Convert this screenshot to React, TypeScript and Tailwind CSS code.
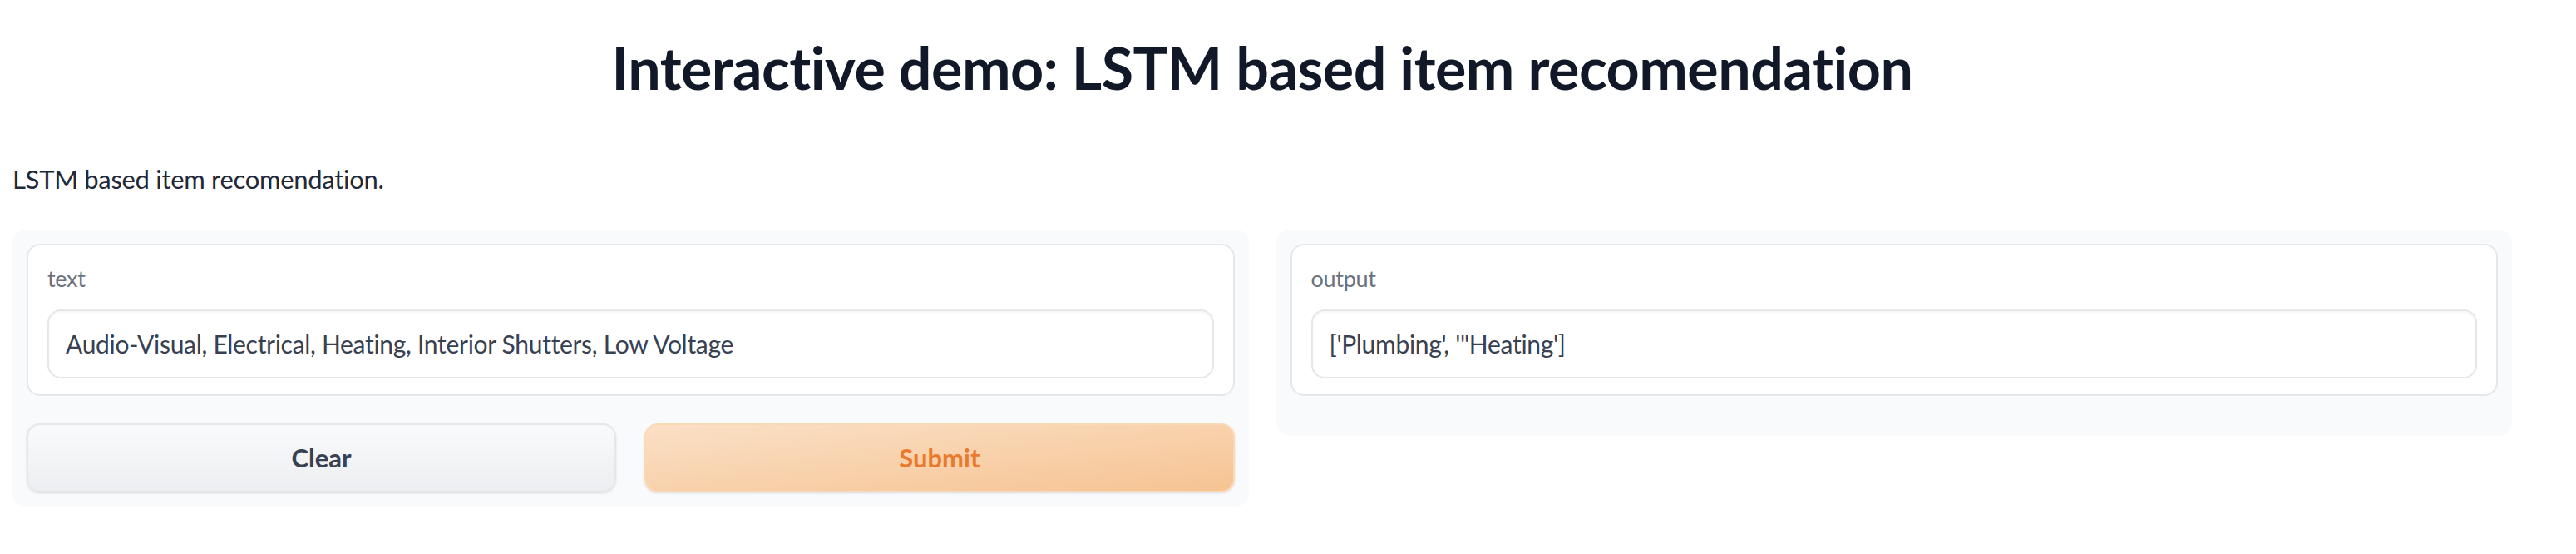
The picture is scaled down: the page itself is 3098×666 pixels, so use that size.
import React from 'react';

const font = { fontFamily: 'Lato, "Noto Sans", sans-serif' };

export default function App() {
  return (
    <div className="bg-white min-h-[666px] w-[3098px]" style={font}>
      <div className="ml-[15px] w-[3006px] pt-[41px]">
        <h1 className="text-center text-[70px] leading-[80px] font-bold text-[#111827] tracking-[-0.5px]">
          Interactive demo: LSTM based item recomendation
        </h1>
        <p className="mt-[72px] text-[31px] leading-[44px] text-[#1f2937] tracking-[-0.3px]">
          LSTM based item recomendation.
        </p>

        <div className="mt-[39px] grid grid-cols-2 gap-[33px] items-start">
          <Panel>
            <Field label="text" value="Audio-Visual, Electrical, Heating, Interior Shutters, Low Voltage" />
            <div className="mt-[33px] grid grid-cols-2 gap-[34px]">
              <button className="h-[83px] rounded-[16px] border-2 border-[#e5e7eb] bg-gradient-to-b from-[#f9fafb] to-[#eceef1] text-[31px] font-bold text-[#374151] shadow-sm">
                Clear
              </button>
              <button className="h-[83px] rounded-[16px] border-2 border-[#fcd9b6] bg-gradient-to-br from-[#fae0c6] to-[#f6c392] text-[31px] font-bold text-[#e97a2d] shadow-sm">
                Submit
              </button>
            </div>
          </Panel>
          <Panel extra="pb-[48px]">
            <Field label="output" value={`['Plumbing', '"Heating']`} />
          </Panel>
        </div>
      </div>
    </div>
  );
}

function Panel({ children, extra = '' }: { children: React.ReactNode; extra?: string }) {
  return <div className={`rounded-[16px] bg-[#f9fafb] p-[17px] ${extra}`}>{children}</div>;
}

function Field({ label, value }: { label: string; value: string }) {
  return (
    <div className="h-[183px] rounded-[16px] border-2 border-[#e5e7eb] bg-white px-[23px] pt-[23px]">
      <div className="text-[27px] leading-[34px] text-[#6b7280] tracking-[-0.3px]">{label}</div>
      <div className="mt-[20px] h-[83px] rounded-[16px] border-2 border-[#e5e7eb] bg-white shadow-[inset_0_2px_3px_rgba(0,0,0,0.04)] px-[20px] flex items-center text-[30px] text-[#374151] tracking-[-0.3px]">
        {value}
      </div>
    </div>
  );
}
